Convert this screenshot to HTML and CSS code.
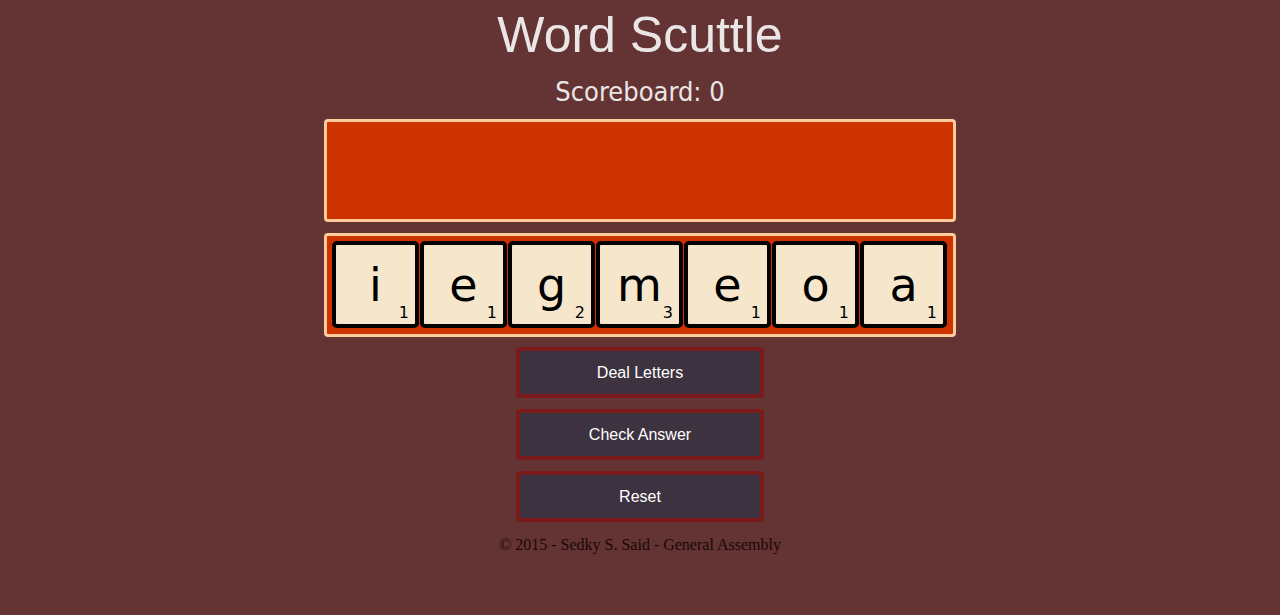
FILE: index.html
```html
<!DOCTYPE html>
<html lang="en">
<head>
<meta charset="utf-8">
<title>Word Scuttle</title>
<link rel="stylesheet" href="styles.css">
</head>
<body>
<main class="game">
  <h1 class="title">Word Scuttle</h1>
  <h2 class="score">Scoreboard: 0</h2>
  <section class="answer-board"></section>
  <section class="rack">
    <div class="tile"><span class="letter">i</span><span class="points">1</span></div>
    <div class="tile"><span class="letter">e</span><span class="points">1</span></div>
    <div class="tile"><span class="letter">g</span><span class="points">2</span></div>
    <div class="tile"><span class="letter">m</span><span class="points">3</span></div>
    <div class="tile"><span class="letter">e</span><span class="points">1</span></div>
    <div class="tile"><span class="letter">o</span><span class="points">1</span></div>
    <div class="tile"><span class="letter">a</span><span class="points">1</span></div>
  </section>
  <div class="controls">
    <button class="btn">Deal Letters</button>
    <button class="btn">Check Answer</button>
    <button class="btn">Reset</button>
  </div>
  <footer class="footer">© 2015 - Sedky S. Said - General Assembly</footer>
</main>
</body>
</html>
```
FILE: styles.css
```css
html, body {
  margin: 0;
  padding: 0;
}
body {
  background: #643333;
  min-height: 615px;
}
.game {
  width: 632px;
  margin: 0 auto;
  display: flex;
  flex-direction: column;
  align-items: center;
}
.title {
  margin: 10px 0 0;
  font-family: "Liberation Sans", Arial, sans-serif;
  font-weight: normal;
  font-size: 50px;
  line-height: 50px;
  color: #ebe6e6;
}
.score {
  margin: 18px 0 0;
  font-family: "DejaVu Sans", sans-serif;
  font-stretch: condensed;
  font-weight: normal;
  font-size: 27px;
  line-height: 27px;
  color: #ebe6e6;
}
.answer-board {
  margin-top: 14px;
  box-sizing: border-box;
  width: 632px;
  height: 103px;
  background: #cc3300;
  border: 3px solid #ffcc99;
  border-radius: 4px;
}
.rack {
  margin-top: 11px;
  box-sizing: border-box;
  width: 632px;
  height: 104px;
  padding: 5px;
  display: flex;
  gap: 1px;
  background: #cc3300;
  border: 3px solid #ffcc99;
  border-radius: 4px;
}
.tile {
  position: relative;
  box-sizing: border-box;
  width: 87px;
  height: 87px;
  background: #f5e6cc;
  border: 4px solid #000;
  border-radius: 5px;
  display: flex;
  align-items: center;
  justify-content: center;
}
.letter {
  font-family: "DejaVu Sans", Verdana, sans-serif;
  font-size: 46px;
  line-height: 1;
  color: #000;
  margin-top: 0;
}
.points {
  position: absolute;
  right: 6px;
  bottom: 3px;
  font-family: "DejaVu Sans", Verdana, sans-serif;
  font-size: 16px;
  line-height: 1;
  color: #000;
}
.controls {
  margin-top: 10px;
  display: flex;
  flex-direction: column;
  gap: 11px;
}
.btn {
  box-sizing: border-box;
  width: 248px;
  height: 51px;
  background: #3d3340;
  border: 4px solid #7b1a1a;
  border-radius: 4px;
  color: #ffffff;
  font-family: "Liberation Sans", Arial, sans-serif;
  font-size: 16px;
  padding: 0;
}
.footer {
  margin-top: 14px;
  font-family: "Liberation Serif", "Times New Roman", serif;
  font-size: 16px;
  line-height: 18px;
  color: #1a0808;
}
```
